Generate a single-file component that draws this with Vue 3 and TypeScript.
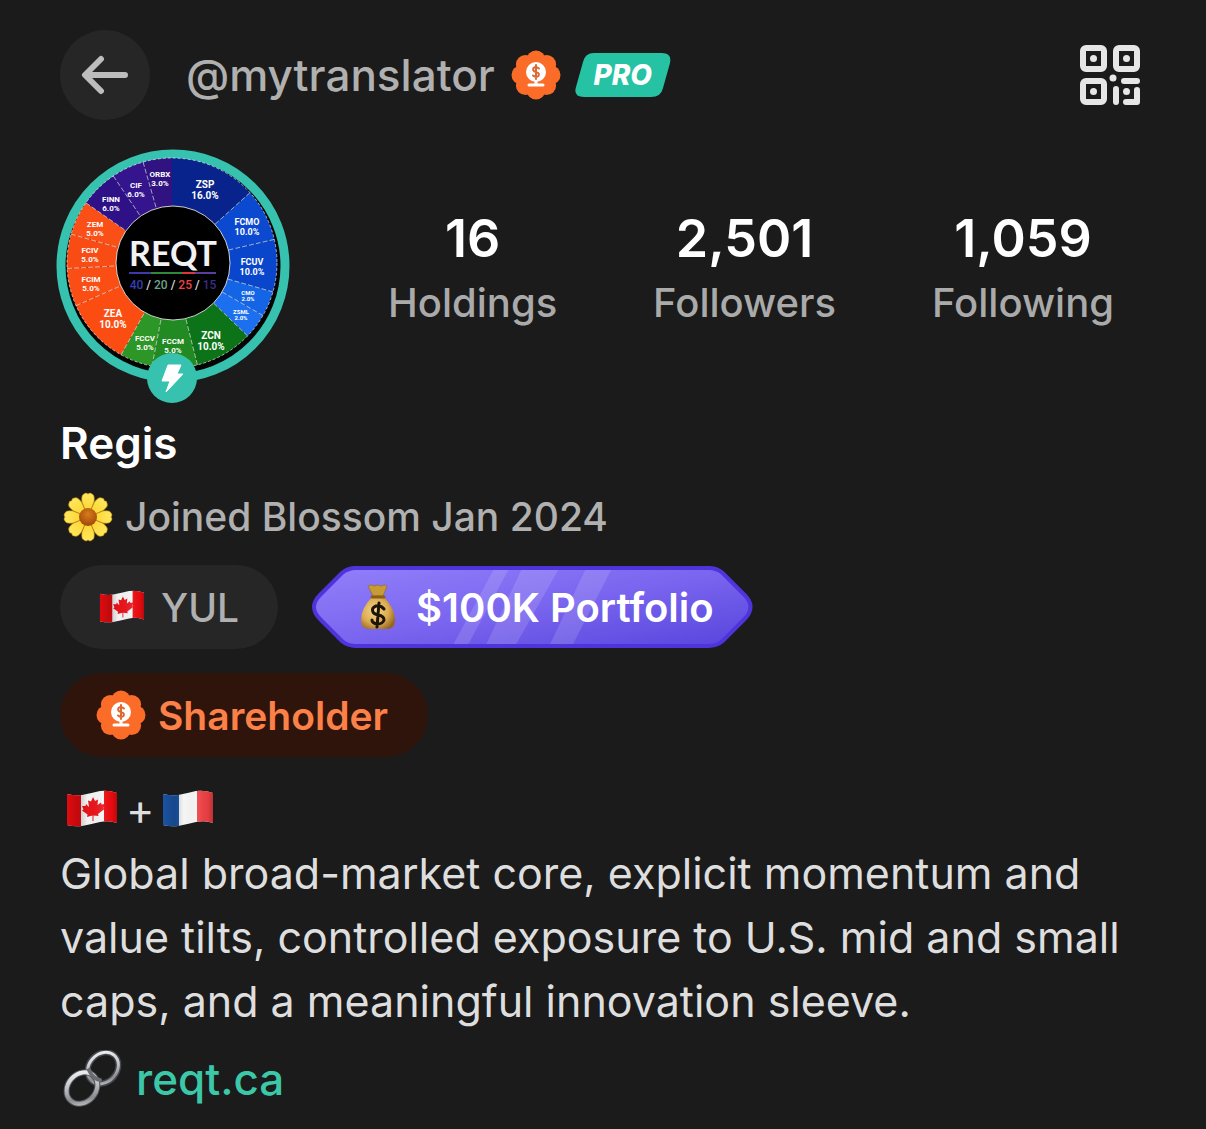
<script setup lang="ts">
interface Stat {
  value: string
  label: string
}

interface Slice {
  name: string
  share: string
  from: number
  to: number
  color: string
  x: number
  y: number
  size: number
}

const stats: Stat[] = [
  { value: '16', label: 'Holdings' },
  { value: '2,501', label: 'Followers' },
  { value: '1,059', label: 'Following' },
]

// Angles are degrees clockwise from twelve o'clock.
const slices: Slice[] = [
  { name: 'ZSP', share: '16.0%', from: 0, to: 48, color: '#08248c', x: 149, y: 39, size: 10 },
  { name: 'FCMO', share: '10.0%', from: 48, to: 77, color: '#0b4ad0', x: 191, y: 76, size: 9 },
  { name: 'FCUV', share: '10.0%', from: 77, to: 106, color: '#0a46cc', x: 196, y: 116, size: 9 },
  { name: 'CMO', share: '2.0%', from: 106, to: 120, color: '#1464e6', x: 192, y: 146, size: 6 },
  { name: 'ZSML', share: '2.0%', from: 120, to: 134, color: '#1c70f0', x: 185, y: 165, size: 6 },
  { name: 'ZCN', share: '10.0%', from: 134, to: 166, color: '#0c7318', x: 155, y: 190, size: 10 },
  { name: 'FCCM', share: '5.0%', from: 166, to: 191, color: '#228a22', x: 117, y: 195, size: 8 },
  { name: 'FCCV', share: '5.0%', from: 191, to: 209, color: '#2c9626', x: 89, y: 192, size: 8 },
  { name: 'ZEA', share: '10.0%', from: 209, to: 246, color: '#fb4d12', x: 57, y: 168, size: 10 },
  { name: 'FCIM', share: '5.0%', from: 246, to: 267, color: '#fa4e14', x: 35, y: 133, size: 8 },
  { name: 'FCIV', share: '5.0%', from: 267, to: 286, color: '#f84c14', x: 34, y: 104, size: 8 },
  { name: 'ZEM', share: '5.0%', from: 286, to: 305, color: '#fa5018', x: 39, y: 78, size: 8 },
  { name: 'FINN', share: '6.0%', from: 305, to: 326, color: '#2e1186', x: 55, y: 53, size: 8 },
  { name: 'CIF', share: '6.0%', from: 326, to: 344, color: '#34158e', x: 80, y: 39, size: 8 },
  { name: 'ORBX', share: '3.0%', from: 344, to: 360, color: '#301280', x: 104, y: 28, size: 8 },
]

const CX = 116
const CY = 114
const OUTER = 105

function point(deg: number, radius: number): string {
  const a = (deg * Math.PI) / 180
  return `${(CX + radius * Math.sin(a)).toFixed(1)} ${(CY - radius * Math.cos(a)).toFixed(1)}`
}

function wedge(s: Slice): string {
  return `M${CX} ${CY}L${point(s.from, OUTER)}A${OUTER} ${OUTER} 0 0 1 ${point(s.to, OUTER)}Z`
}

function spoke(deg: number): string {
  return `M${point(deg, 58)}L${point(deg, OUTER)}`
}

const petals = [0, 45, 90, 135, 180, 225, 270, 315]
</script>

<template>
  <svg class="sprite" width="0" height="0" aria-hidden="true">
    <defs>
      <linearGradient id="flagShade" x1="0" x2="1" y1="0" y2="0">
        <stop offset="0" stop-color="#000" stop-opacity=".05" />
        <stop offset=".24" stop-color="#000" stop-opacity=".2" />
        <stop offset=".42" stop-color="#000" stop-opacity="0" />
        <stop offset=".7" stop-color="#fff" stop-opacity=".08" />
        <stop offset=".88" stop-color="#000" stop-opacity=".04" />
        <stop offset="1" stop-color="#000" stop-opacity=".25" />
      </linearGradient>
      <clipPath id="flagWave">
        <path d="M1 4Q9 6 16 5Q26 3 34 1Q43 0 51 3V33Q43 30 34 32Q26 34 16 36Q9 37 1 35Z" />
      </clipPath>
      <linearGradient id="petal" x1="0" x2="0" y1="0" y2="1">
        <stop offset="0" stop-color="#ffe85c" />
        <stop offset=".6" stop-color="#fcd93c" />
        <stop offset="1" stop-color="#dc9c18" />
      </linearGradient>
      <radialGradient id="pollen" cx=".5" cy=".35" r=".65">
        <stop offset="0" stop-color="#d87c1c" />
        <stop offset="1" stop-color="#a04808" />
      </radialGradient>
      <radialGradient id="sack" cx=".42" cy=".45" r=".65">
        <stop offset="0" stop-color="#f6d68a" />
        <stop offset=".6" stop-color="#dcac50" />
        <stop offset="1" stop-color="#946420" />
      </radialGradient>
      <linearGradient id="steel" x1="0" x2="1" y1="0" y2="1">
        <stop offset="0" stop-color="#fafcff" />
        <stop offset=".4" stop-color="#c8cad0" />
        <stop offset=".75" stop-color="#8a8c90" />
        <stop offset="1" stop-color="#d4d6da" />
      </linearGradient>
      <linearGradient id="violet" x1="0" x2="1" y1="0" y2="1">
        <stop offset="0" stop-color="#9180fa" />
        <stop offset=".45" stop-color="#7c68f0" />
        <stop offset="1" stop-color="#5844dc" />
      </linearGradient>
    </defs>

    <symbol id="share-badge" viewBox="0 0 50 50">
      <g fill="#fa6c28">
        <circle cx="25" cy="25" r="21" />
        <circle v-for="a in petals" :key="a" cx="25" cy="10" r="9.500" :transform="`rotate(${a} 25 25)`" />
      </g>
      <circle cx="25" cy="22" r="10" fill="#fff" />
      <path d="M25 31V35M18 35H32" fill="none" stroke="#fff" stroke-width="3" stroke-linecap="round" />
      <path d="M28 18.500Q25 16 22.500 18Q21 21 25 22Q29 23 27.500 26Q25 28 22 25.500M25 15V29" fill="none" stroke="#dc6830" stroke-width="2" stroke-linecap="round" />
    </symbol>

    <symbol id="flag-ca" viewBox="0 0 52 38">
      <g clip-path="url(#flagWave)">
        <path fill="#f4f4f4" d="M0 0H52V38H0Z" />
        <path fill="#ee0c10" d="M0 0H15V38H0ZM38 0H52V38H38Z" />
        <path fill="#e8141a" d="M27 7L29 11L32 9.500L31.500 15L35 12.500L35.500 14.500L39 14L37.500 18L38.500 19L32 24L32.500 26L27.500 25.500V31H26.500V25.500L21 27L21.500 24.500L16 20.500L17.500 19.500L16 16L19.500 16L20 14L23 17L22 10.500L25 11.500Z" />
        <path fill="url(#flagShade)" d="M0 0H52V38H0Z" />
      </g>
    </symbol>

    <symbol id="flag-fr" viewBox="0 0 52 38">
      <g clip-path="url(#flagWave)">
        <path fill="#f6f6f6" d="M0 0H52V38H0Z" />
        <path fill="#1c58ac" d="M0 0H17V38H0Z" />
        <path fill="#ee4044" d="M35 0H52V38H35Z" />
        <path fill="url(#flagShade)" d="M0 0H52V38H0Z" />
      </g>
    </symbol>
  </svg>

  <main class="profile">
    <header class="topbar">
      <button class="back" type="button" aria-label="Back">
        <svg width="48" height="40" viewBox="0 0 48 40" fill="none" stroke="#bdbdbd" stroke-width="6" stroke-linecap="round" stroke-linejoin="round" aria-hidden="true">
          <path d="M44 20H5M20 4L4 20L20 36" />
        </svg>
      </button>
      <h1 class="handle">@mytranslator</h1>
      <svg class="badge" role="img" aria-label="Shareholder"><use href="#share-badge" /></svg>
      <span class="pro">
        <svg class="backing" viewBox="0 0 98 46" preserveAspectRatio="none" aria-hidden="true">
          <path d="M20 1H88Q98 1 96 11L89 36Q87 45 77 45H10Q-1 45 2 35L9 10Q11 1 20 1Z" fill="#25c3a4" />
        </svg>
        <span class="pro-text">PRO</span>
      </span>
      <button class="qr" type="button" aria-label="Show QR code">
        <svg width="60" height="60" viewBox="0 0 60 60" fill="none" stroke="#e6e6e6" stroke-width="6" stroke-linecap="round" stroke-linejoin="round" aria-hidden="true">
          <rect x="3" y="3" width="21" height="21" rx="3" />
          <rect x="36" y="3" width="21" height="21" rx="3" />
          <rect x="3" y="36" width="21" height="21" rx="3" />
          <path d="M44 36H57M36 44V57M57 45V57M46 57H57" />
          <g fill="#e6e6e6" stroke="none">
            <circle cx="13.500" cy="13.500" r="3.500" />
            <circle cx="46.500" cy="13.500" r="3.500" />
            <circle cx="13.500" cy="46.500" r="3.500" />
            <circle cx="46.500" cy="46.500" r="3.500" />
            <circle cx="33" cy="33" r="3.500" />
          </g>
        </svg>
      </button>
    </header>

    <section class="summary">
      <svg class="avatar" viewBox="0 0 234 256" role="img" aria-label="REQT allocation wheel">
        <circle cx="117" cy="117" r="112" fill="#050505" stroke="#36c2ae" stroke-width="9" />
        <path v-for="s in slices" :key="s.name" :d="wedge(s)" :fill="s.color" />
        <g fill="none" stroke="#fff" stroke-opacity=".6">
          <path v-for="s in slices.slice(1)" :key="s.name" :d="spoke(s.from)" stroke-dasharray="5 2" />
          <circle :cx="CX" :cy="CY" :r="OUTER" stroke-dasharray="3 2" />
        </g>
        <g class="ticker" fill="#fff" text-anchor="middle">
          <text v-for="s in slices" :key="s.name" :font-size="s.size">
            <tspan :x="s.x" :y="s.y">{{ s.name }}</tspan>
            <tspan :x="s.x" :y="s.y + s.size + (s.size > 6 ? 1 : 0)">{{ s.share }}</tspan>
          </text>
        </g>
        <circle :cx="CX + 1" :cy="CY" r="57" fill="#000" stroke="#fff" stroke-opacity=".8" />
        <text class="fund" x="117" y="117" fill="#f2f2f2" text-anchor="middle">REQT</text>
        <path d="M73 124H95" stroke="#4038a8" stroke-width="2" />
        <path d="M95 124H126" stroke="#2f8a3c" stroke-width="2" />
        <path d="M126 124H139" stroke="#d83a3a" stroke-width="2" />
        <path d="M139 124H160" stroke="#5c3c9c" stroke-width="2" />
        <text class="split" x="117" y="140" fill="#ddd" text-anchor="middle">
          <tspan fill="#3540b4">40</tspan> / <tspan fill="#6aa488">20</tspan> / <tspan fill="#ee4444">25</tspan> / <tspan fill="#3c2c8c">15</tspan>
        </text>
        <circle cx="116" cy="229" r="25" fill="#36c2ae" />
        <path d="M112 216H125L121 225H127L110 243L114 232H106Z" fill="#fff" stroke="#fff" stroke-linejoin="round" />
      </svg>
      <nav class="stats" aria-label="Profile statistics">
        <a v-for="s in stats" :key="s.label" class="stat" href="#">
          <span class="stat-value">{{ s.value }}</span>
          <span class="stat-label">{{ s.label }}</span>
        </a>
      </nav>
    </section>

    <h2 class="name">Regis</h2>

    <p class="joined">
      <svg width="50" height="50" viewBox="0 0 50 50" aria-hidden="true">
        <path v-for="a in petals" :key="a" d="M25 25L19 10Q18 3 21 2Q23 0 25 2Q27 0 29 2Q32 3 31 10Z" fill="url(#petal)" stroke="#c88c10" stroke-width=".6" :transform="`rotate(${a} 25 25)`" />
        <circle cx="25" cy="25" r="9" fill="url(#pollen)" />
      </svg>
      <span>Joined Blossom Jan 2024</span>
    </p>

    <div class="tags">
      <span class="tag place">
        <svg width="46" height="34" role="img" aria-label="Canada"><use href="#flag-ca" /></svg>
        <span>YUL</span>
      </span>
      <span class="tag portfolio">
        <svg class="backing" viewBox="0 0 442 84" preserveAspectRatio="none" aria-hidden="true">
          <path d="M44 3H398Q406 3 412 8L434 30Q446 42 434 54L412 76Q406 81 398 81H44Q36 81 30 76L8 54Q-4 42 8 30L30 8Q36 3 44 3Z" fill="url(#violet)" stroke="#4f34dc" stroke-width="4" />
          <path d="M182 5H197L157 79H142ZM210 5H247L205 79H175ZM274 5H300L262 79H239Z" fill="#fff" fill-opacity=".13" />
        </svg>
        <svg class="bag" width="36" height="46" viewBox="0 0 36 46" aria-hidden="true">
          <path d="M8 2Q12 0 14 2Q18 0 21 2Q25 0 27 2L23 12H13Z" fill="#c89c34" stroke="#8c6418" stroke-width=".6" />
          <path d="M13 12H23Q35 24 35 36Q35 45 27 45H9Q1 45 1 36Q1 24 13 12Z" fill="url(#sack)" />
          <path d="M12 13H24" stroke="#8c5c1c" stroke-width="3" stroke-linecap="round" />
          <path d="M24 25Q21 21 16 22Q11 24 13 28Q14 30 18 31Q24 32 24 36Q23 40 17 40Q12 39 12 36M19 19L17 43" fill="none" stroke="#1c1408" stroke-width="3" stroke-linecap="round" />
        </svg>
        <span class="tag-text">$100K Portfolio</span>
      </span>
      <span class="tag shareholder">
        <svg class="badge" aria-hidden="true"><use href="#share-badge" /></svg>
        <span>Shareholder</span>
      </span>
    </div>

    <div class="bio">
      <p class="flags">
        <svg width="52" height="38" role="img" aria-label="Canada"><use href="#flag-ca" /></svg>
        <span>+</span>
        <svg width="52" height="38" role="img" aria-label="France"><use href="#flag-fr" /></svg>
      </p>
      <p>Global broad-market core, explicit momentum and value tilts, controlled exposure to U.S. mid and small caps, and a meaningful innovation sleeve.</p>
    </div>

    <p class="website">
      <svg width="60" height="58" viewBox="0 0 60 58" fill="none" aria-hidden="true">
        <g stroke="#44464a" stroke-width="6">
          <ellipse cx="41" cy="18" rx="14" ry="17" transform="rotate(42 41 18)" />
        </g>
        <ellipse cx="41" cy="18" rx="14" ry="17" transform="rotate(42 41 18)" stroke="url(#steel)" stroke-width="3" />
        <ellipse cx="20" cy="38" rx="14" ry="17" transform="rotate(42 20 38)" stroke="#505256" stroke-width="6" />
        <ellipse cx="20" cy="38" rx="14" ry="17" transform="rotate(42 20 38)" stroke="url(#steel)" stroke-width="4" />
        <path d="M27 20Q31 29 38 30" stroke="#6a6c70" stroke-width="4" stroke-linecap="round" />
      </svg>
      <a href="https://reqt.ca">reqt.ca</a>
    </p>
  </main>
</template>

<style>
body {
  background: #1b1b1b;
}
</style>

<style scoped>
.sprite {
  position: absolute;
}

.profile {
  padding: 30px 60px 16px;
  color: #dedede;
  font-family: Inter, "Liberation Sans", sans-serif;
  font-weight: 500;
}

.profile svg {
  flex: none;
  display: block;
}

h1,
h2,
p {
  margin: 0;
}

button {
  padding: 0;
  border: 0;
  background: none;
  cursor: pointer;
}

a {
  text-decoration: none;
}

.topbar {
  display: flex;
  align-items: center;
  padding-right: 6px;
}

.back {
  display: grid;
  place-items: center;
  flex: none;
  width: 90px;
  height: 90px;
  border-radius: 50%;
  background: #262626;
}

.handle {
  margin: 0 16px 0 36px;
  color: #b0b0b0;
  font-size: 44px;
  font-weight: 500;
}

.badge {
  width: 50px;
  height: 50px;
}

.pro {
  position: relative;
  display: grid;
  place-items: center;
  width: 98px;
  height: 46px;
  margin-left: 13px;
}

.backing {
  position: absolute;
  inset: 0;
  width: 100%;
  height: 100%;
}

.pro-text,
.bag,
.tag-text {
  position: relative;
}

.pro-text {
  color: #fff;
  font-size: 28px;
  font-style: italic;
  font-weight: 800;
}

.qr {
  margin-left: auto;
}

.summary {
  display: flex;
  align-items: flex-start;
  margin: 29px 0 13px -4px;
}

.avatar {
  width: 234px;
  height: 256px;
}

.ticker {
  font-family: "Liberation Sans Narrow", Roboto, sans-serif;
  font-weight: 700;
}

.fund {
  font: 700 34px Lato, sans-serif;
}

.split {
  font: 500 12px Roboto, sans-serif;
}

.stats {
  display: flex;
  flex: 1;
  justify-content: space-between;
  padding: 58px 32px 0 98px;
}

.stat {
  display: flex;
  flex-direction: column;
  align-items: center;
}

.stat-value {
  color: #fff;
  font-size: 52px;
  font-weight: 600;
  line-height: 64px;
}

.stat-label {
  color: #aaa;
  font-size: 40px;
  line-height: 64px;
}

.name {
  color: #fff;
  font-size: 44px;
  font-weight: 600;
  line-height: 50px;
}

.joined {
  display: flex;
  align-items: center;
  gap: 12px;
  margin: 24px 0 23px;
  padding-left: 3px;
  color: #b0b0b0;
  font-size: 39px;
  line-height: 50px;
}

.tags {
  display: flex;
  flex-wrap: wrap;
  gap: 24px 34px;
}

.tag {
  display: flex;
  align-items: center;
  height: 84px;
  font-size: 39px;
  border-radius: 42px;
}

.place {
  gap: 16px;
  padding: 0 39px;
  background: #262626;
  color: #b0b0b0;
}

.portfolio {
  position: relative;
  gap: 20px;
  padding: 0 39px 0 48px;
  color: #fff;
  font-size: 40px;
  font-weight: 600;
}

.shareholder {
  gap: 12px;
  padding: 0 40px 0 36px;
  background: #2f140b;
  color: #fc8148;
  font-weight: 600;
}

.bio {
  margin-top: 20px;
  font-size: 43px;
  font-weight: 400;
  line-height: 64px;
}

.flags {
  display: flex;
  align-items: center;
  gap: 8px;
  padding-left: 6px;
}

.website {
  display: flex;
  align-items: center;
  gap: 14px;
  margin-top: 14px;
  padding-left: 2px;
  font-size: 44px;
  line-height: 64px;
}

.website a {
  color: #3cc8a8;
}
</style>
